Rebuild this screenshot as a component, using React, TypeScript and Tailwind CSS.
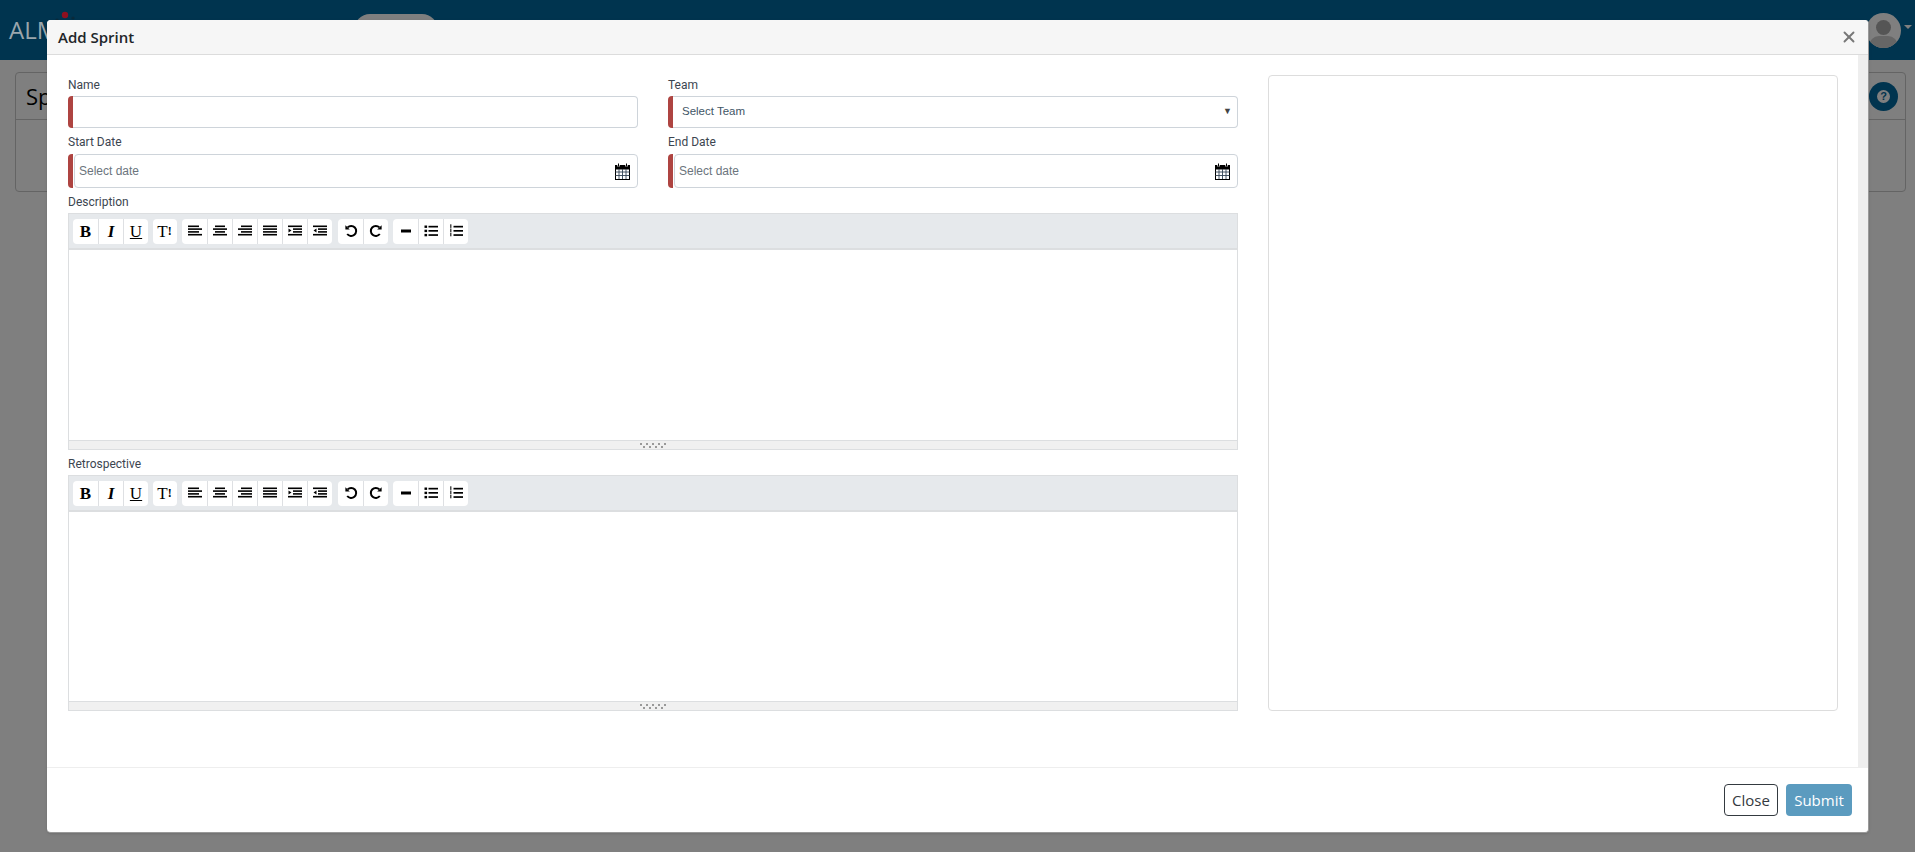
import React from "react";
import { X } from "lucide-react";

const sans = "font-['Open_Sans',sans-serif]";
const labelFont = "font-['Roboto',sans-serif]";

const Bars = ({ rows }: { rows: [number, number][] }) => (
  <svg width="14" height="14" viewBox="0 0 14 14" fill="#000">
    {rows.map(([x, w], i) => (
      <rect key={i} x={x} y={1.5 + i * 2.8} width={w} height="1.6" />
    ))}
  </svg>
);

const Indent = ({ flip }: { flip?: boolean }) => (
  <svg width="14" height="14" viewBox="0 0 14 14" fill="#000">
    <rect x="0" y="1.5" width="14" height="1.6" />
    <rect x="5" y="4.3" width="9" height="1.6" />
    <rect x="5" y="7.1" width="9" height="1.6" />
    <rect x="0" y="9.9" width="14" height="1.6" />
    {flip ? <path d="M3.5 4.5v4L0.5 6.5z" /> : <path d="M0.5 4.5v4l3-2z" />}
  </svg>
);

const Undo = ({ flip }: { flip?: boolean }) => (
  <svg width="14" height="14" viewBox="0 0 14 14" fill="none" stroke="#000" strokeWidth="2" className={flip ? "-scale-x-100" : ""}>
    <path d="M3.6 3.4A5 5 0 1 1 3.2 10" />
    <path d="M1.4 1.2v4.4h4.4z" fill="#000" stroke="none" />
  </svg>
);

const ListUl = () => (
  <svg width="14" height="14" viewBox="0 0 14 14" fill="#000">
    {[1.5, 5.7, 9.9].map((y) => (
      <g key={y}>
        <rect x="0.5" y={y} width="2.6" height="2.4" />
        <rect x="4.5" y={y + 0.3} width="9.5" height="1.7" />
      </g>
    ))}
  </svg>
);

const ListOl = () => (
  <svg width="14" height="14" viewBox="0 0 14 14" fill="#000">
    {[1.5, 5.7, 9.9].map((y) => (
      <g key={y}>
        <rect x="1" y={y - 1.2} width="1.5" height="3.6" opacity="0.7" />
        <rect x="4.5" y={y + 0.3} width="9.5" height="1.7" />
      </g>
    ))}
  </svg>
);

const Btn = ({ children }: { children: React.ReactNode }) => (
  <div className="flex h-[25px] w-[25px] items-center justify-center border-l border-[#dee0e3] first:border-l-0">
    {children}
  </div>
);

const Group = ({ children, className = "" }: { children: React.ReactNode; className?: string }) => (
  <div className={`flex rounded-[4px] bg-white ${className}`}>{children}</div>
);

const serif = "font-['Liberation_Serif',serif] text-[17px] leading-none text-black";

const Toolbar = () => (
  <div className="flex h-[37px] items-center gap-[5px] border border-b-2 border-[#dcdee0] bg-[#e6e9ec] pl-[4px]">
    <Group>
      <Btn><span className={`${serif} font-bold`}>B</span></Btn>
      <Btn><span className={`${serif} font-bold italic`}>I</span></Btn>
      <Btn><span className={`${serif} underline`}>U</span></Btn>
    </Group>
    <Group>
      <div className="flex h-[25px] w-[24px] items-center justify-center">
        <span className={`${serif} flex items-center`}>T<span className="w-[5px] text-[12px] font-bold">!</span></span>
      </div>
    </Group>
    <Group>
      <Btn><Bars rows={[[0, 11], [0, 14], [0, 11], [0, 14]]} /></Btn>
      <Btn><Bars rows={[[2, 10], [0, 14], [2, 10], [0, 14]]} /></Btn>
      <Btn><Bars rows={[[3, 11], [0, 14], [3, 11], [0, 14]]} /></Btn>
      <Btn><Bars rows={[[0, 14], [0, 14], [0, 14], [0, 14]]} /></Btn>
      <Btn><Indent /></Btn>
      <Btn><Indent flip /></Btn>
    </Group>
    <Group className="ml-px">
      <Btn><Undo /></Btn>
      <Btn><Undo flip /></Btn>
    </Group>
    <Group>
      <Btn>
        <svg width="14" height="14" viewBox="0 0 14 14" fill="#000"><rect x="2" y="5.5" width="10" height="3" /></svg>
      </Btn>
      <Btn><ListUl /></Btn>
      <Btn><ListOl /></Btn>
    </Group>
  </div>
);

const FieldLabel = ({ children, className = "mb-[3px]" }: { children: React.ReactNode; className?: string }) => (
  <label className={`block h-[15px] text-[12px] leading-[15px] text-[#3c4550] ${labelFont} ${className}`}>{children}</label>
);

const Editor = ({ label, bodyClass }: { label: string; bodyClass: string }) => (
  <div className="mt-[7px] flex flex-col">
    <FieldLabel>{label}</FieldLabel>
    <Toolbar />
    <div className={`border-x border-[#dcdee0] bg-white ${bodyClass}`} />
    <div className="flex h-[10px] items-center justify-center border border-[#dcdee0] bg-[#f0f0f0]">
      <svg width="26" height="5" viewBox="0 0 26 5" fill="#999">
        {[0, 6, 12, 18, 24].map((x) => <rect key={x} x={x} y="0" width="2" height="2" />)}
        {[3, 9, 15, 21].map((x) => <rect key={x} x={x} y="3" width="2" height="2" />)}
      </svg>
    </div>
  </div>
);

const CalendarIcon = () => (
  <svg width="15" height="17" viewBox="0 0 15 17" fill="none" stroke="#000" strokeWidth="1">
    <rect x="0.5" y="2.5" width="14" height="14" fill="#fff" />
    <rect x="0.5" y="2.5" width="14" height="3.5" fill="#000" />
    <path d="M3.5 0.5v3M11.5 0.5v3" stroke="#fff" strokeWidth="2.4" />
    <path d="M3.5 0.5v3M11.5 0.5v3" stroke="#000" strokeWidth="1" />
    <path d="M0.5 9h14M0.5 12.5h14M4 6v10M7.5 6v10M11 6v10" stroke="#345" strokeWidth="0.9" />
  </svg>
);

const Required = ({ children, h }: { children: React.ReactNode; h: string }) => (
  <div className={`flex ${h}`}>
    <div className="w-[5px] shrink-0 rounded-l-[4px] bg-[#ae4441]" />
    {children}
  </div>
);

const DateInput = ({ label }: { label: string }) => (
  <div>
    <FieldLabel className="mb-[4px]">{label}</FieldLabel>
    <Required h="h-[34px]">
      <div className="ml-px flex flex-1 items-center justify-between rounded-[4px] border border-[#ced4da] bg-white pl-[4px] pr-[7px] font-['Liberation_Sans',sans-serif] text-[12px] text-[#6c757d]">
        <span>Select date</span>
        <CalendarIcon />
      </div>
    </Required>
  </div>
);

export default function App() {
  return (
    <div className="relative h-[852px] w-[1915px] overflow-hidden bg-white">
      {/* Page behind the modal */}
      <nav className="flex h-[60px] items-center justify-between bg-[#00689e] pl-[9px] pr-[3px]">
        <div className="flex items-center">
          <span className={`relative z-10 text-[24px] text-[#9ba6ac] ${sans}`}>ALM</span>
          <div className="ml-[296px] h-[32px] w-[84px] rounded-[20px] bg-white" />
        </div>
        <div className="flex items-center gap-[3px]">
          <div className="relative h-[35px] w-[35px] overflow-hidden rounded-full bg-white">
            <div className="absolute left-[10px] top-[7px] h-[15px] w-[15px] rounded-full bg-[#aaaaaa]" />
            <div className="absolute left-[3px] top-[23px] h-[20px] w-[29px] rounded-full bg-[#cccccc]" />
          </div>
          <div className="mb-[6px] h-0 w-0 border-x-[4px] border-t-[4px] border-x-transparent border-t-white" />
        </div>
      </nav>
      <svg className="absolute left-[50px] top-[8px] z-10" width="30" height="14" viewBox="0 0 30 14">
        <circle cx="15" cy="7" r="3.2" fill="#8e1020" />
        <circle cx="7" cy="12" r="1.6" fill="#0a2a3a" />
        <circle cx="23" cy="10" r="1.6" fill="#0a2a3a" />
      </svg>
      <div className="pl-[15px] pr-[9px] pt-[12px]">
        <div className="h-[120px] rounded-[4px] border border-[#c8c8c8]">
          <div className={`flex h-[47px] items-center justify-between border-b border-[#c8c8c8] pl-[10px] pr-[7px] text-[22px] text-black ${sans}`}>
            <span>Sp</span>
            <div className="flex h-[29px] w-[29px] items-center justify-center rounded-full bg-[#00689e]">
              <div className="flex h-[13px] w-[13px] items-center justify-center rounded-full bg-white font-['Liberation_Sans',sans-serif] text-[11px] font-bold leading-none text-[#00689e]">?</div>
            </div>
          </div>
        </div>
      </div>

      {/* Overlay */}
      <div className="absolute inset-0 bg-black/50" />

      {/* Modal */}
      <div className="absolute left-[47px] top-[20px] z-20 flex h-[813px] w-[1822px] flex-col rounded-[4px] border-r border-b border-[#999] bg-white shadow-sm">
        <div className={`flex h-[35px] shrink-0 items-center justify-between rounded-t-[4px] border-b border-[#dcdcdc] bg-[#f6f6f6] pl-[11px] pr-[10px] text-[15px] font-semibold text-[#212529] ${sans}`}>
          <span>Add Sprint</span>
          <X size={18} className="text-[#777]" strokeWidth={2.5} />
        </div>

        <div className="flex min-h-0 flex-1">
          <div className="flex flex-1 gap-[30px] pl-[21px] pr-[20px] pt-[20px]">
            <div className="flex w-[1170px] flex-col pt-[3px]">
              <div className="grid grid-cols-2 gap-x-[30px]">
                <div>
                  <FieldLabel>Name</FieldLabel>
                  <Required h="h-[32px]">
                    <div className="flex-1 rounded-r-[4px] border border-l-0 border-[#ced4da] bg-white" />
                  </Required>
                </div>
                <div>
                  <FieldLabel>Team</FieldLabel>
                  <Required h="h-[32px]">
                    <div className="flex flex-1 items-center justify-between rounded-r-[4px] border border-l-0 border-[#ced4da] bg-white pl-[9px] pr-[5px] font-['Liberation_Sans',sans-serif] text-[11.5px] text-[#3f5666]">
                      <span>Select Team</span>
                      <span className="text-[9px] text-[#444]">▼</span>
                    </div>
                  </Required>
                </div>
              </div>
              <div className="mt-[7px] grid grid-cols-2 gap-x-[30px]">
                <DateInput label="Start Date" />
                <DateInput label="End Date" />
              </div>
              <Editor label="Description" bodyClass="h-[190px]" />
              <Editor label="Retrospective" bodyClass="h-[189px]" />
            </div>
            <div className="mb-[56px] w-[570px] rounded-[4px] border border-[#dddddd]" />
          </div>
          <div className="w-[10px] shrink-0 bg-[#eeeeee]" />
        </div>

        <div className={`flex h-[65px] shrink-0 items-start justify-end gap-[8px] border-t border-[#eeeeee] pr-[16px] pt-[16px] text-[15px] ${sans}`}>
          <button className="h-[32px] w-[54px] rounded-[4px] border border-[#343a40] bg-white text-[#343a40]">Close</button>
          <button className="h-[32px] w-[66px] rounded-[4px] bg-[#5b9bbf] font-medium text-white">Submit</button>
        </div>
      </div>
    </div>
  );
}
